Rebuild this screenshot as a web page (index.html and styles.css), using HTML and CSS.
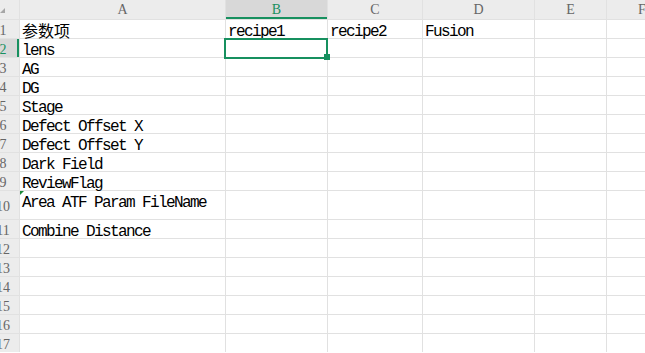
FILE: index.html
```html
<!DOCTYPE html>
<html lang="zh-CN">
<head>
    <meta charset="UTF-8">
    <title>Sheet1</title>
    <link rel="stylesheet" href="styles.css">
</head>
<body>
    <div class="sheet">
        <!-- column headers -->
        <div class="corner"></div>
        <div class="col-head">A</div>
        <div class="col-head active">B</div>
        <div class="col-head">C</div>
        <div class="col-head">D</div>
        <div class="col-head">E</div>
        <div class="col-head">F</div>

        <div class="row-head">1</div>
        <div class="cell"><span class="cjk">参数项</span></div>
        <div class="cell">recipe1</div>
        <div class="cell">recipe2</div>
        <div class="cell">Fusion</div>
        <div class="cell"></div>
        <div class="cell"></div>

        <div class="row-head active">2</div>
        <div class="cell">lens</div>
        <div class="cell selected"><span class="handle"></span></div>
        <div class="cell"></div>
        <div class="cell"></div>
        <div class="cell"></div>
        <div class="cell"></div>

        <div class="row-head">3</div>
        <div class="cell">AG</div>
        <div class="cell"></div>
        <div class="cell"></div>
        <div class="cell"></div>
        <div class="cell"></div>
        <div class="cell"></div>

        <div class="row-head">4</div>
        <div class="cell">DG</div>
        <div class="cell"></div>
        <div class="cell"></div>
        <div class="cell"></div>
        <div class="cell"></div>
        <div class="cell"></div>

        <div class="row-head">5</div>
        <div class="cell">Stage</div>
        <div class="cell"></div>
        <div class="cell"></div>
        <div class="cell"></div>
        <div class="cell"></div>
        <div class="cell"></div>

        <div class="row-head">6</div>
        <div class="cell">Defect Offset X</div>
        <div class="cell"></div>
        <div class="cell"></div>
        <div class="cell"></div>
        <div class="cell"></div>
        <div class="cell"></div>

        <div class="row-head">7</div>
        <div class="cell">Defect Offset Y</div>
        <div class="cell"></div>
        <div class="cell"></div>
        <div class="cell"></div>
        <div class="cell"></div>
        <div class="cell"></div>

        <div class="row-head">8</div>
        <div class="cell">Dark Field</div>
        <div class="cell"></div>
        <div class="cell"></div>
        <div class="cell"></div>
        <div class="cell"></div>
        <div class="cell"></div>

        <div class="row-head">9</div>
        <div class="cell">ReviewFlag</div>
        <div class="cell"></div>
        <div class="cell"></div>
        <div class="cell"></div>
        <div class="cell"></div>
        <div class="cell"></div>

        <div class="row-head">10</div>
        <div class="cell flagged">Area ATF Param FileName</div>
        <div class="cell"></div>
        <div class="cell"></div>
        <div class="cell"></div>
        <div class="cell"></div>
        <div class="cell"></div>

        <div class="row-head">11</div>
        <div class="cell">Combine Distance</div>
        <div class="cell"></div>
        <div class="cell"></div>
        <div class="cell"></div>
        <div class="cell"></div>
        <div class="cell"></div>

        <div class="row-head">12</div>
        <div class="cell"></div>
        <div class="cell"></div>
        <div class="cell"></div>
        <div class="cell"></div>
        <div class="cell"></div>
        <div class="cell"></div>

        <div class="row-head">13</div>
        <div class="cell"></div>
        <div class="cell"></div>
        <div class="cell"></div>
        <div class="cell"></div>
        <div class="cell"></div>
        <div class="cell"></div>

        <div class="row-head">14</div>
        <div class="cell"></div>
        <div class="cell"></div>
        <div class="cell"></div>
        <div class="cell"></div>
        <div class="cell"></div>
        <div class="cell"></div>

        <div class="row-head">15</div>
        <div class="cell"></div>
        <div class="cell"></div>
        <div class="cell"></div>
        <div class="cell"></div>
        <div class="cell"></div>
        <div class="cell"></div>

        <div class="row-head">16</div>
        <div class="cell"></div>
        <div class="cell"></div>
        <div class="cell"></div>
        <div class="cell"></div>
        <div class="cell"></div>
        <div class="cell"></div>

        <div class="row-head">17</div>
        <div class="cell"></div>
        <div class="cell"></div>
        <div class="cell"></div>
        <div class="cell"></div>
        <div class="cell"></div>
        <div class="cell"></div>
    </div>
</body>
</html>
```

FILE: styles.css
```css
html, body {
    margin: 0;
    padding: 0;
    background-color: #fff;
    overflow: hidden;
}
.sheet {
    display: grid;
    grid-template-columns: 19px 205px 101px 94px 111px 71px 70px;
    grid-template-rows: 19px repeat(9, 18px) 28px repeat(7, 18px);
    gap: 1px;
    background-color: #e1e1e1;
    width: 677px;
}
.corner {
    position: relative;
    background-color: #ececec;
}
.corner::after {
    content: "";
    position: absolute;
    left: 0;
    bottom: 6px;
    border-bottom: 5px solid #a6a6a6;
    border-left: 5px solid transparent;
}
.col-head, .row-head {
    background-color: #ececec;
    color: #666;
    font-family: "Liberation Serif", serif;
    font-size: 14px;
    overflow: hidden;
    white-space: nowrap;
}
.col-head {
    text-align: center;
    line-height: 19px;
}
.col-head.active {
    background-color: #d8d8d8;
    color: #17905f;
    box-shadow: inset 0 -2px 0 #17905f;
}
.row-head {
    display: flex;
    align-items: center;
    justify-content: center;
    padding-right: 13px;
    padding-top: 3px;
    box-sizing: border-box;
}
.row-head.active {
    background-color: #d8d8d8;
    color: #17905f;
    box-shadow: inset -2px 0 0 #17905f;
}
.cell {
    position: relative;
    background-color: #fff;
    color: #000;
    font-family: "Liberation Mono", "Noto Sans CJK SC", monospace;
    font-size: 16px;
    letter-spacing: -1.6px;
    line-height: 18px;
    padding: 3px 0 0 2px;
    box-sizing: border-box;
    white-space: nowrap;
}
.cjk {
    font-family: "Noto Sans CJK SC", sans-serif;
    font-size: 16px;
    letter-spacing: 0;
    line-height: 15px;
}
.cell.selected {
    z-index: 2;
}
.cell.selected::before {
    content: "";
    position: absolute;
    left: -2px;
    top: -1px;
    right: -1px;
    bottom: -2px;
    border: 2px solid #17905f;
}
.handle {
    position: absolute;
    right: -3px;
    bottom: -3px;
    width: 6px;
    height: 6px;
    background-color: #17905f;
}
.cell.flagged::before {
    content: "";
    position: absolute;
    left: 0;
    top: 0;
    border-top: 4px solid #1d8a3b;
    border-right: 4px solid transparent;
}
```
